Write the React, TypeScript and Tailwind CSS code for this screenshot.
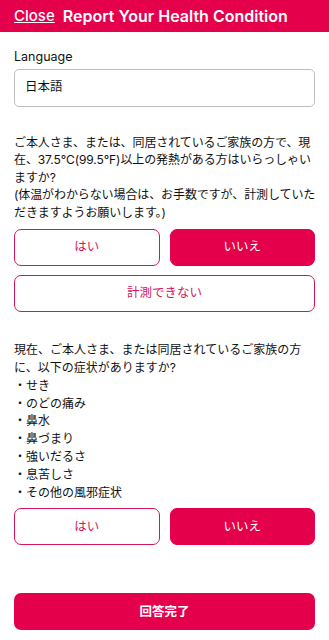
const font = { fontFamily: 'Inter, "Noto Sans CJK JP", sans-serif' };

function Choice({ selected, label, full }: { selected?: boolean; label: string; full?: boolean }) {
  return (
    <button
      className={
        (full ? "w-full " : "flex-1 ") +
        (selected
          ? "bg-[#e5004b] text-white border-[#e5004b] "
          : "bg-white text-[#d6145a] border-[#d6145a] ") +
        "h-[37px] rounded-[7px] border text-[12.5px]"
      }
    >
      {label}
    </button>
  );
}

export default function App() {
  return (
    <div className="w-[329px] h-[640px] bg-white text-[#111]" style={font}>
      {/* header */}
      <header className="h-[32px] bg-[#e5004b] flex items-center px-[14px] gap-[8px] text-white">
        <span className="underline text-[15px] font-medium">Close</span>
        <span className="text-[16px] font-semibold">Report Your Health Condition</span>
      </header>

      <main className="px-[14px]">
        <div className="mt-[16px] text-[12.5px]">Language</div>
        <div className="mt-[2px] h-[38px] rounded-[5px] border border-[#bdbdbd] flex items-center px-[10px] text-[12.5px]">
          日本語
        </div>

        <p className="mt-[27px] text-[12px] leading-[17.5px] whitespace-nowrap tracking-[-0.1px]">
          ご本人さま、または、同居されているご家族の方で、現
          <br />
          在、37.5°C(99.5°F)以上の発熱がある方はいらっしゃい
          <br />
          ますか?
          <br />
          (体温がわからない場合は、お手数ですが、計測していた
          <br />
          だきますようお願いします。)
        </p>

        <div className="mt-[8px] flex gap-[10px]">
          <Choice label="はい" />
          <Choice label="いいえ" selected />
        </div>
        <div className="mt-[9px]">
          <Choice label="計測できない" full />
        </div>

        <p className="mt-[29px] text-[12px] leading-[17.8px] whitespace-nowrap">
          現在、ご本人さま、または同居されているご家族の方
          <br />
          に、以下の症状がありますか?
          <br />・せき
          <br />・のどの痛み
          <br />・鼻水
          <br />・鼻づまり
          <br />・強いだるさ
          <br />・息苦しさ
          <br />・その他の風邪症状
        </p>

        <div className="mt-[7px] flex gap-[10px]">
          <Choice label="はい" />
          <Choice label="いいえ" selected />
        </div>

        <button className="mt-[48px] w-full h-[37px] rounded-[7px] bg-[#e5004b] text-white text-[12.5px] font-bold">
          回答完了
        </button>
      </main>
    </div>
  );
}
